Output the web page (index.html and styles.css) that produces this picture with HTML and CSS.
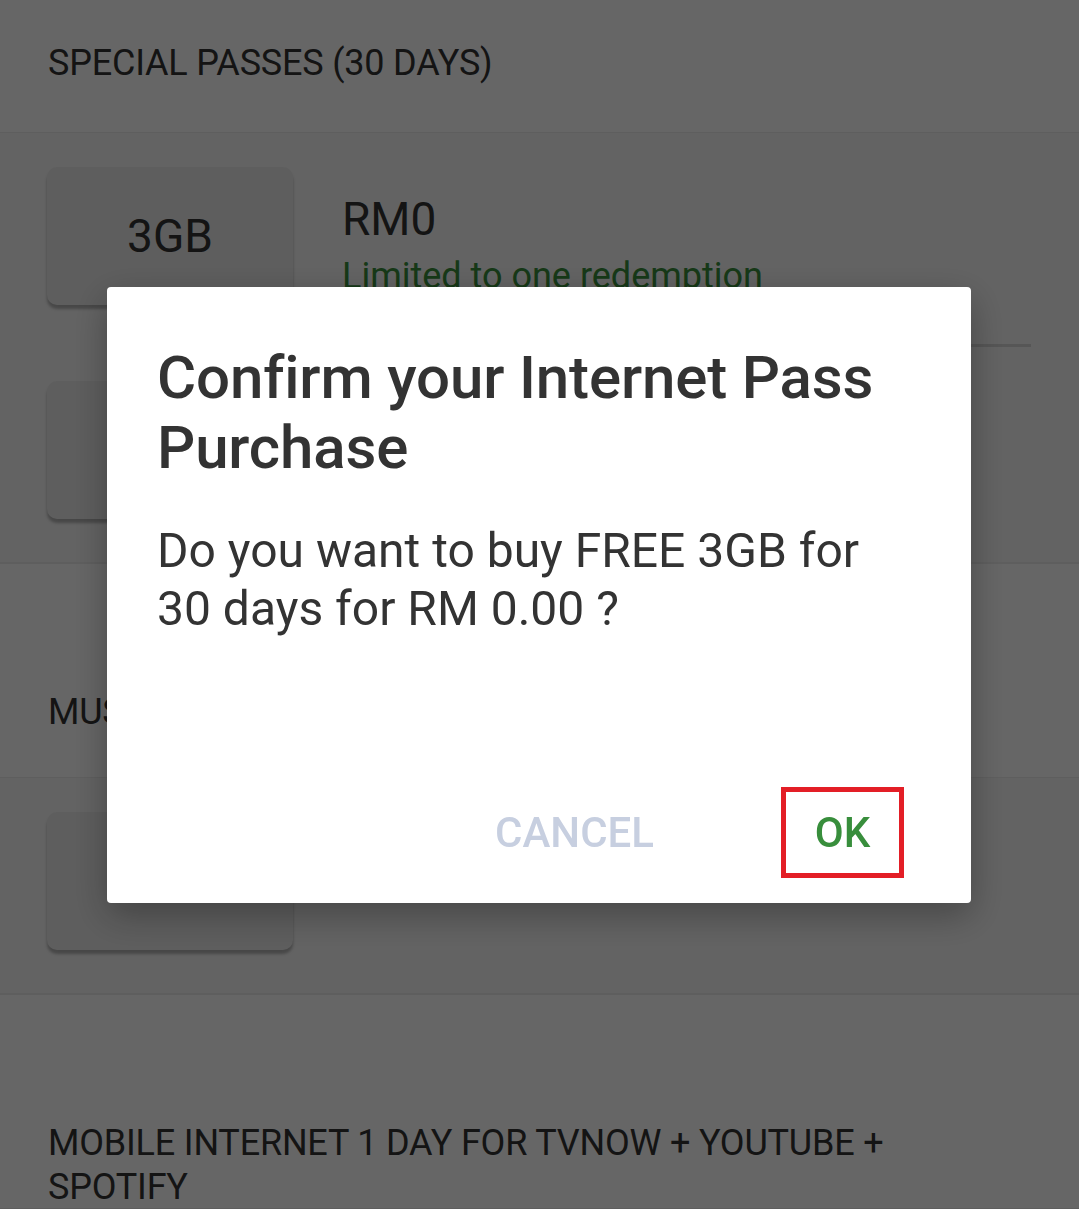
FILE: index.html
```html
<!DOCTYPE html>
<html lang="en">
<head>
    <meta charset="UTF-8">
    <meta name="viewport" content="width=device-width, initial-scale=1.0">
    <title>Internet Passes</title>
    <link rel="stylesheet" href="styles.css">
</head>
<body>
    <div class="page">
        <div class="section-head first">Special Passes (30 days)</div>
        <div class="section">
            <div class="pass">
                <div class="pass-card">3GB</div>
                <div class="pass-info">
                    <div class="pass-price">RM0</div>
                    <div class="pass-note">Limited to one redemption</div>
                </div>
            </div>
            <div class="pass">
                <div class="pass-card"></div>
                <div class="pass-info"></div>
            </div>
        </div>

        <div class="section-head">Mus</div>
        <div class="section">
            <div class="pass">
                <div class="pass-card"></div>
                <div class="pass-info low">
                    <div class="pass-price">RM1</div>
                </div>
            </div>
        </div>

        <div class="section-head">Mobile Internet 1 Day for TVNOW + YouTube + Spotify</div>
    </div>

    <div class="overlay">
        <div class="dialog">
            <h2 class="dialog-title">Confirm your Internet Pass Purchase</h2>
            <p class="dialog-text">Do you want to buy FREE 3GB for 30 days for RM 0.00 ?</p>
            <div class="dialog-actions">
                <button class="btn cancel-btn">Cancel</button>
                <button class="btn ok-btn">OK</button>
            </div>
        </div>
    </div>
</body>
</html>
```

FILE: styles.css
```css
* {
    margin: 0;
    padding: 0;
    box-sizing: border-box;
}

body {
    font-family: Roboto, 'Noto Sans', Arial, sans-serif;
    background: #f7f7f7;
    overflow: hidden;
    height: 1209px;
}

.page {
    background: #f7f7f7;
}

.section-head {
    height: 216px;
    background: #ffffff;
    color: #333333;
    font-size: 36px;
    line-height: 44px;
    letter-spacing: -0.2px;
    text-transform: uppercase;
    padding: 126px 48px 0;
    border-top: 2px solid #ececec;
    border-bottom: 1px solid #ececec;
}

.section-head.first {
    height: 133px;
    padding-top: 41px;
    border-top: none;
}

.section {
    background: #f7f7f7;
}

.pass {
    display: flex;
    padding: 0 48px 0 47px;
}

.pass + .pass .pass-info,
.pass:last-child .pass-info {
    border-bottom: none;
}

.pass-card {
    width: 246px;
    height: 138px;
    margin: 34px 0 42px;
    background: #ebebeb;
    border-radius: 10px;
    box-shadow: 0 4px 3px rgba(0, 0, 0, 0.28);
    display: flex;
    align-items: center;
    justify-content: center;
    font-size: 46px;
    color: #333333;
    flex-shrink: 0;
}

.pass:last-child .pass-card {
    margin-bottom: 43px;
}

.pass-info {
    flex: 1;
    margin-left: 49px;
    padding-top: 59px;
    border-bottom: 3px solid #d6d6d6;
}

.pass-info.low {
    padding-top: 61px;
}

.pass-price {
    font-size: 46px;
    line-height: 54px;
    color: #333333;
}

.pass-note {
    margin-top: 9px;
    font-size: 36px;
    line-height: 42px;
    color: #388e3c;
}

.overlay {
    position: fixed;
    inset: 0;
    background: rgba(0, 0, 0, 0.6);
    display: flex;
    align-items: flex-start;
    padding: 287px 0 0 107px;
}

.dialog {
    width: 864px;
    height: 616px;
    background: #ffffff;
    border-radius: 4px;
    box-shadow: 0 12px 36px rgba(0, 0, 0, 0.3);
    padding: 56px 50px 25px;
    display: flex;
    flex-direction: column;
}

.dialog-title {
    font-size: 60px;
    line-height: 70px;
    font-weight: 500;
    letter-spacing: -0.15px;
    color: #333333;
}

.dialog-text {
    margin-top: 39px;
    font-size: 48px;
    line-height: 58px;
    color: #333333;
}

.dialog-actions {
    margin-top: auto;
    display: flex;
    justify-content: flex-end;
    gap: 93px;
    padding-right: 17px;
}

.btn {
    font-family: Roboto, 'Noto Sans', Arial, sans-serif;
    font-size: 42px;
    font-weight: 500;
    text-transform: uppercase;
    background: none;
    border: none;
    height: 91px;
    cursor: pointer;
}

.cancel-btn {
    color: #c7cfe0;
    padding: 0 34px;
}

.ok-btn {
    width: 123px;
    color: #388e3c;
    border: 5px solid #e31e26;
}
```
